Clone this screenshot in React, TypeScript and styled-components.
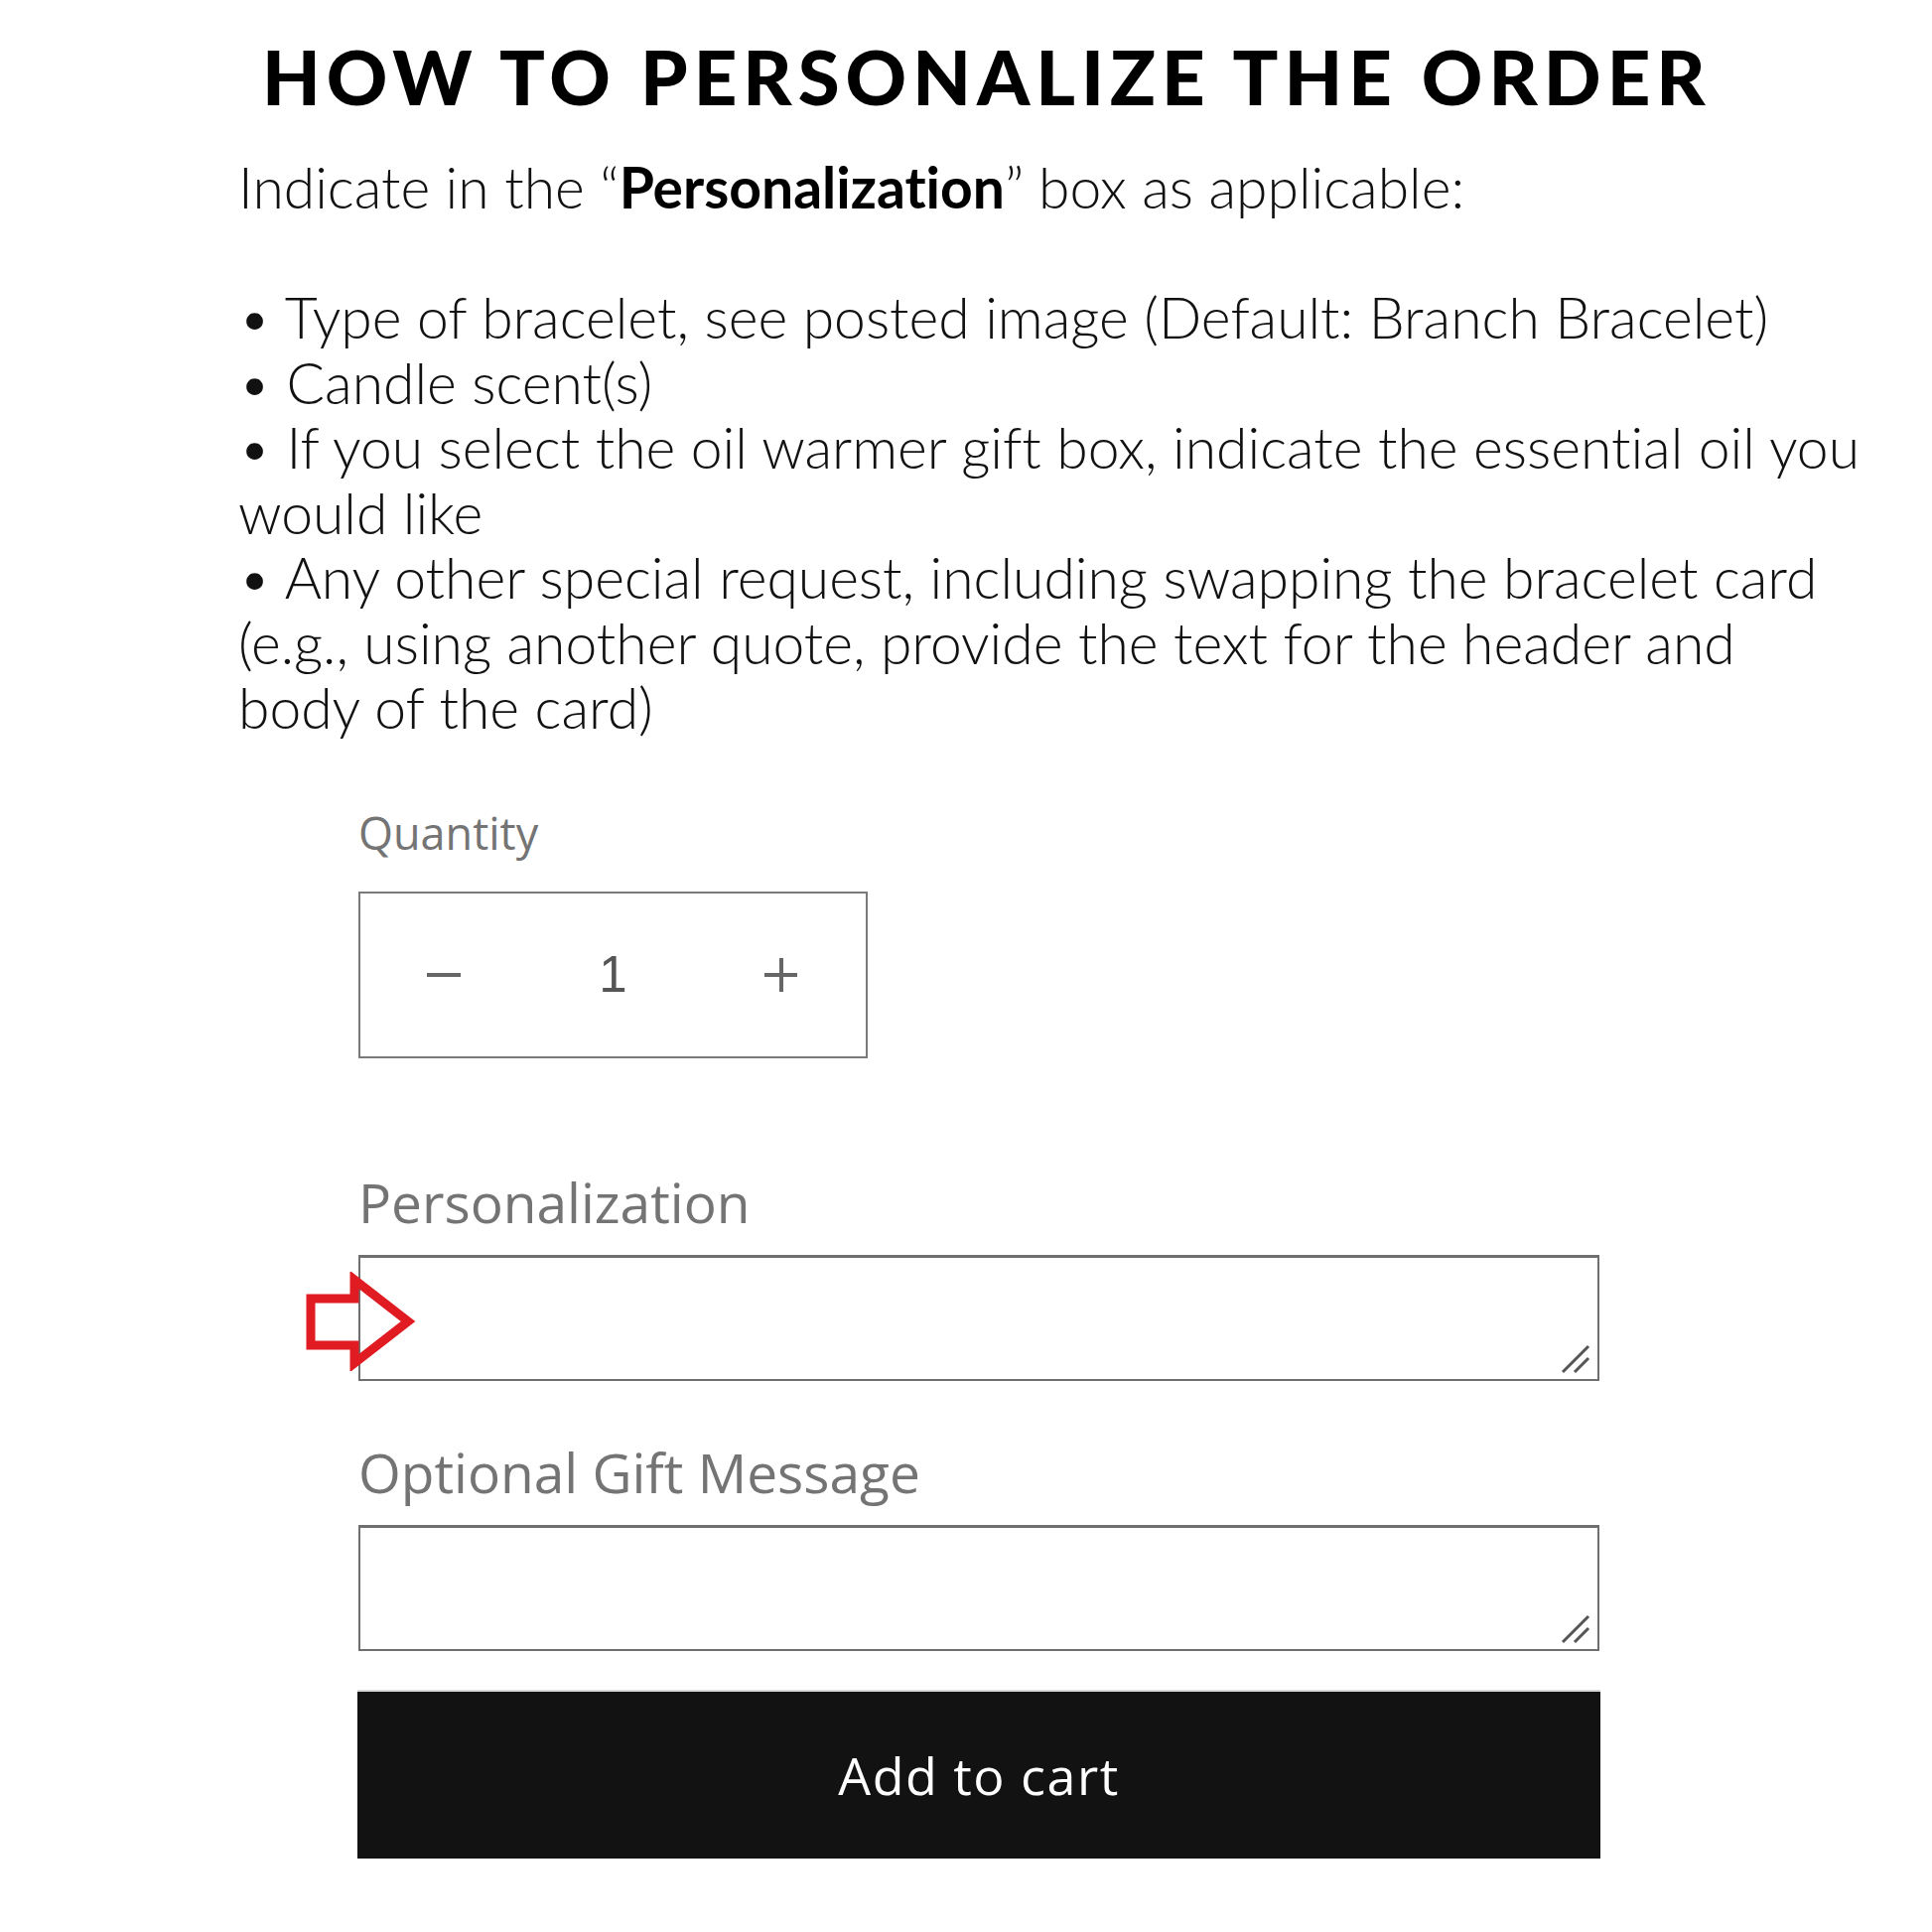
import React from 'react';
import styled, { createGlobalStyle } from 'styled-components';

const Global = createGlobalStyle`
  html, body { margin: 0; padding: 0; background: #ffffff; }
  body { width: 1946px; min-height: 1946px; font-variant-ligatures: none; }
`;

const Page = styled.main`
  box-sizing: border-box;
  width: 1946px;
  height: 1946px;
  padding: 39px 0 0 240px;
  display: flex;
  flex-direction: column;
`;

const Title = styled.h1`
  margin: 0 0 0 24px;
  font-family: Lato, 'Noto Sans', sans-serif;
  font-weight: 900;
  font-size: 76px;
  line-height: 76px;
  letter-spacing: 6px;
  color: #000;
  white-space: nowrap;
  font-variant-ligatures: none;
`;

const Intro = styled.div`
  margin-top: 41px;
  font-family: Lato, 'Noto Sans', sans-serif;
  font-weight: 300;
  font-size: 57px;
  line-height: 65.5px;
  color: #111;
  white-space: nowrap;
  font-variant-ligatures: none;
`;

const Line = styled.div`
  height: 65.5px;
`;

const Strong = styled.strong`
  font-weight: 700;
  color: #000;
`;

const Form = styled.section`
  margin: 66px 0 0 121px;
  width: 1250px;
  display: flex;
  flex-direction: column;
  font-family: 'Open Sans', 'Noto Sans', sans-serif;
  font-variant-ligatures: none;
`;

const Label = styled.div<{ $size: number; $gap?: number }>`
  margin-top: ${(p) => p.$gap ?? 0}px;
  font-size: ${(p) => p.$size}px;
  line-height: ${(p) => Math.round(p.$size * 1.2)}px;
  color: #747474;
  font-weight: 400;
`;

const QtyBox = styled.div`
  box-sizing: border-box;
  margin-top: 32px;
  width: 513px;
  height: 168px;
  border: 2px solid #7a7a7a;
  display: grid;
  grid-template-columns: repeat(3, 1fr);
  align-items: center;
  justify-items: center;
`;

const QtyButton = styled.button`
  background: none;
  border: 0;
  padding: 0;
  display: flex;
  align-items: center;
  justify-content: center;
  width: 60px;
  height: 60px;
  color: #666;
`;

const QtyValue = styled.span`
  font-family: 'Liberation Sans', Arial, sans-serif;
  font-size: 51px;
  color: #555;
  line-height: 1;
`;

const FieldWrap = styled.div`
  position: relative;
  margin-top: 20px;
  width: 1250px;
  height: 127px;
`;

const Area = styled.textarea`
  box-sizing: border-box;
  display: block;
  width: 100%;
  height: 100%;
  border: 2px solid #6f6f6f;
  border-top-width: 3px;
  resize: none;
  outline: none;
  background: #fff;
  margin: 0;
`;

const Grip = styled.svg`
  position: absolute;
  right: 9px;
  bottom: 7px;
  width: 30px;
  height: 30px;
`;

const Arrow = styled.svg`
  position: absolute;
  left: -56px;
  top: 17px;
  width: 116px;
  height: 100px;
`;

const CartButton = styled.button`
  margin-top: 39px;
  margin-left: -1px;
  width: 1252px;
  height: 170px;
  background: #121212;
  border: 0;
  border-top: 2px solid #d8d8d8;
  color: #fff;
  font-family: 'Open Sans', 'Noto Sans', sans-serif;
  font-size: 52px;
  letter-spacing: 1.5px;
  display: flex;
  align-items: center;
  justify-content: center;
`;

const ResizeGrip = () => (
  <Grip viewBox="0 0 30 30">
    <line x1="2" y1="28" x2="28" y2="2" stroke="#555" strokeWidth="3" />
    <line x1="14" y1="28" x2="28" y2="14" stroke="#555" strokeWidth="3" />
  </Grip>
);

const RedArrow = () => (
  <Arrow viewBox="0 0 116 100">
    <polygon
      points="8,27 52,27 52,8 106,50 52,92 52,74 8,74"
      fill="none"
      stroke="#e01b22"
      strokeWidth="9"
      strokeLinejoin="miter"
    />
  </Arrow>
);

export default function App() {
  return (
    <>
      <Global />
      <Page>
        <Title>HOW TO PERSONALIZE THE ORDER</Title>
        <Intro>
          <Line>
            Indicate in the “<Strong>Personalization</Strong>” box as applicable:
          </Line>
          <Line />
          <Line>• Type of bracelet, see posted image (Default: Branch Bracelet)</Line>
          <Line>• Candle scent(s)</Line>
          <Line>• If you select the oil warmer gift box, indicate the essential oil you</Line>
          <Line>would like</Line>
          <Line>• Any other special request, including swapping the bracelet card</Line>
          <Line>(e.g., using another quote, provide the text for the header and</Line>
          <Line>body of the card)</Line>
        </Intro>
        <Form>
          <Label $size={45}>Quantity</Label>
          <QtyBox>
            <QtyButton aria-label="Decrease quantity">
              <svg width="36" height="6" viewBox="0 0 36 6">
                <rect x="0" y="1" width="34" height="4" fill="#666" />
              </svg>
            </QtyButton>
            <QtyValue>1</QtyValue>
            <QtyButton aria-label="Increase quantity">
              <svg width="34" height="34" viewBox="0 0 34 34">
                <rect x="0" y="15" width="33" height="4" fill="#666" />
                <rect x="15" y="0" width="4" height="34" fill="#666" />
              </svg>
            </QtyButton>
          </QtyBox>
          <Label $size={55} $gap={112}>Personalization</Label>
          <FieldWrap>
            <Area aria-label="Personalization" />
            <ResizeGrip />
            <RedArrow />
          </FieldWrap>
          <Label $size={55} $gap={59}>Optional Gift Message</Label>
          <FieldWrap>
            <Area aria-label="Optional Gift Message" />
            <ResizeGrip />
          </FieldWrap>
          <CartButton>Add to cart</CartButton>
        </Form>
      </Page>
    </>
  );
}
